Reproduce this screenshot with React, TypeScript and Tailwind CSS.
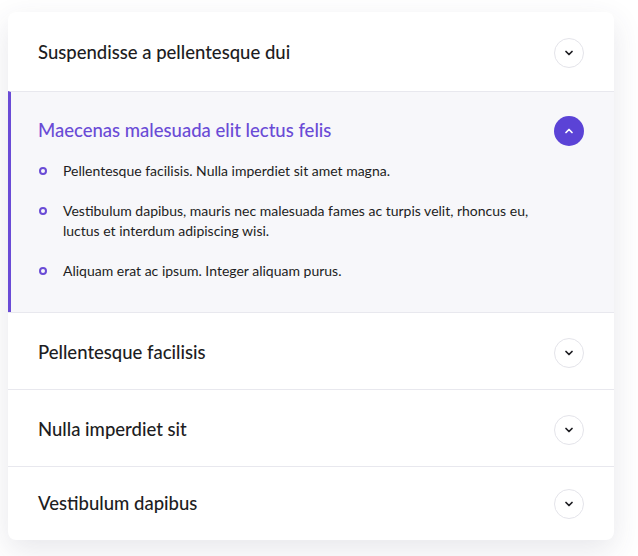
import { ChevronDown, ChevronUp } from 'lucide-react';

const items = [
  { title: 'Suspendisse a pellentesque dui', open: false },
  {
    title: 'Maecenas malesuada elit lectus felis',
    open: true,
    points: [
      'Pellentesque facilisis. Nulla imperdiet sit amet magna.',
      'Vestibulum dapibus, mauris nec malesuada fames ac turpis velit, rhoncus eu, luctus et interdum adipiscing wisi.',
      'Aliquam erat ac ipsum. Integer aliquam purus.',
    ],
  },
  { title: 'Pellentesque facilisis', open: false },
  { title: 'Nulla imperdiet sit', open: false },
  { title: 'Vestibulum dapibus', open: false },
];

export default function App() {
  return (
    <div className="min-h-[556px] bg-white pl-2 pr-6 pt-3 font-['Lato',sans-serif] text-[#1d1d22]">
      <div className="overflow-hidden rounded-lg bg-white shadow-[0_10px_30px_rgba(60,60,90,0.12)]">
        {items.map((item, i) => (
          <div
            key={item.title}
            className={`${i > 0 ? 'border-t border-[#e8e8ee]' : ''} ${item.open ? 'border-l-[3px] border-l-[#6a4bd6] bg-[#f7f7fa] pb-[31px] pl-[27px] pt-[24px]' : 'pl-[30px]'}`}
          >
            <div
              className={`flex items-center justify-between pr-[30px] ${
                item.open ? '' : i === 0 ? 'h-[79px] pt-[2px]' : i === items.length - 1 ? 'h-[73px] pt-[1px]' : 'h-[76px] pt-[3px]'
              }`}
            >
              <h3 className={`text-[18.5px] font-medium ${item.open ? 'text-[#6a4bd6]' : ''}`}>{item.title}</h3>
              {item.open ? (
                <span className="flex h-[30px] w-[30px] items-center justify-center rounded-full bg-[#5b43d6] text-white">
                  <ChevronUp className="h-3 w-3" strokeWidth={3.5} />
                </span>
              ) : (
                <span className="flex h-[30px] w-[30px] items-center justify-center rounded-full border border-[#e4e4ea] bg-white">
                  <ChevronDown className="h-3 w-3" strokeWidth={3.5} />
                </span>
              )}
            </div>
            {item.points && (
              <ul className="mt-[15px] flex flex-col gap-5 pr-[50px]">
                {item.points.map((p) => (
                  <li key={p} className="flex gap-4 pl-px text-[14px] leading-5">
                    <span className="mt-[6px] h-2 w-2 shrink-0 rounded-full border-2 border-[#6a4bd6]" />
                    <span>{p}</span>
                  </li>
                ))}
              </ul>
            )}
          </div>
        ))}
      </div>
    </div>
  );
}
